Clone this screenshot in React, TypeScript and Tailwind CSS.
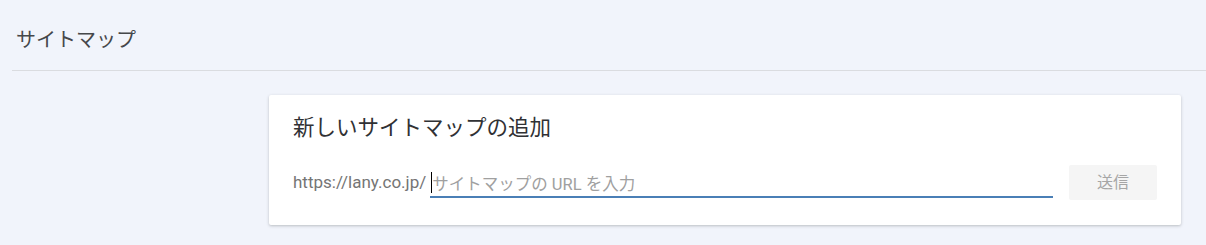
import React, { useState } from 'react';

const font = { fontFamily: 'Roboto, "Noto Sans CJK JP", sans-serif' };

export default function App() {
  const [url, setUrl] = useState('');

  return (
    <div className="w-[1206px] h-[245px] bg-[#f1f4fb] text-[#202124] overflow-hidden" style={font}>
      <div className="pl-[12px]">
        <div className="h-[71px] flex items-center pl-[4px] border-b border-[#dadce0]">
          <h1 className="text-[20px] font-normal text-[#45474a] mt-[10px]">サイトマップ</h1>
        </div>
      </div>

      <div className="pl-[269px] pr-[25px] pt-[24px]">
        <div className="bg-white rounded-[2px] shadow-[0_1px_3px_rgba(60,64,67,0.3)] h-[130px] pl-[24px] pr-[24px] pt-[19px]">
          <h2 className="text-[21.5px] font-normal text-[#303134] leading-[28px]">新しいサイトマップの追加</h2>
          <div className="flex items-center mt-[27px]">
            <span className="text-[17px] text-[#757575] mr-[4px] mt-[-3px]">https://lany.co.jp/</span>
            <div className="flex-1 mr-[16px] relative mt-[-3px]">
              <input
                value={url}
                onChange={(e) => setUrl(e.target.value)}
                placeholder="サイトマップの URL を入力"
                className="w-full h-[30px] text-[16.5px] text-[#202124] placeholder:text-[#a0a0a0] border-b-2 border-[#4a7fb6] outline-none pt-[5px] pl-[2px]"
                style={font}
              />
              {url === '' && (
                <span className="absolute left-[1px] top-[4px] w-[1px] h-[21px] bg-black pointer-events-none" />
              )}
            </div>
            <button
              disabled
              className="w-[88px] h-[35px] bg-[#f5f5f5] text-[#a6a6a6] text-[16px] rounded-[2px] mt-[-4px]"
            >
              送信
            </button>
          </div>
        </div>
      </div>
    </div>
  );
}
